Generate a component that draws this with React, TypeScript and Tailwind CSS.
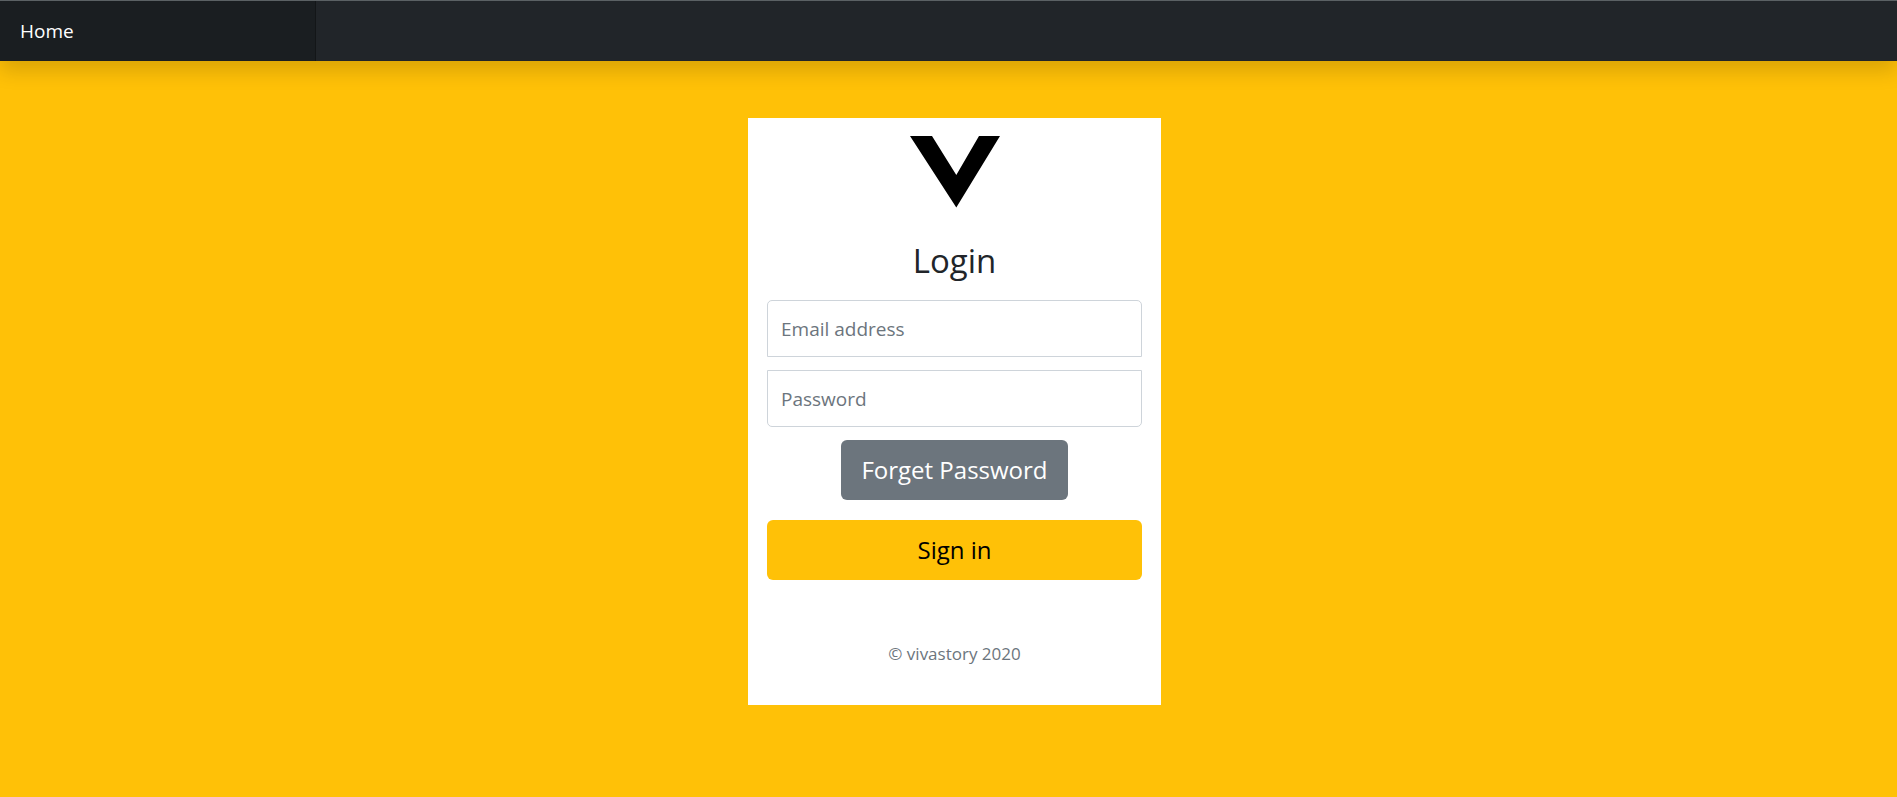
import { useState } from 'react'

function Navbar() {
  return (
    <header className="sticky top-0 border-t border-[#5b6164] bg-[#212529] shadow-[0_10px_20px_rgba(0,0,0,0.15)]">
      <nav className="flex">
        <a
          href="#home"
          className="w-1/6 bg-[#1a1e21] px-5 py-4 text-[19px] leading-7 font-medium text-white shadow-[inset_-1px_0_0_rgba(0,0,0,0.25)]"
        >
          Home
        </a>
      </nav>
    </header>
  )
}

function Logo() {
  return (
    <svg
      role="img"
      aria-label="vivastory"
      viewBox="0 0 90 72"
      className="mx-auto mb-8 h-[72px] w-[90px]"
    >
      <path d="M0 0H22L46.3 39L69 0H90L46.3 71.5Z" fill="#000" />
    </svg>
  )
}

function LoginForm() {
  const [email, setEmail] = useState('')
  const [password, setPassword] = useState('')

  return (
    <form
      className="flex flex-col"
      onSubmit={(e) => e.preventDefault()}
    >
      <Logo />
      <h1 className="mb-[18px] text-center text-[33px] leading-[42px]">Login</h1>

      <input
        type="email"
        aria-label="Email address"
        placeholder="Email address"
        value={email}
        onChange={(e) => setEmail(e.target.value)}
        className="mb-[13px] h-[57px] w-full rounded-t-[5px] border border-[#ced4da] px-[13px] text-[19px] placeholder:text-[#6c757d]"
      />
      <input
        type="password"
        aria-label="Password"
        placeholder="Password"
        value={password}
        onChange={(e) => setPassword(e.target.value)}
        className="mb-[13px] h-[57px] w-full rounded-b-[5px] border border-[#ced4da] px-[13px] text-[19px] placeholder:text-[#6c757d]"
      />

      <button
        type="button"
        className="mb-5 self-center rounded-md bg-[#6c757d] px-5 py-3 text-2xl leading-9 text-white"
      >
        Forget Password
      </button>
      <button
        type="submit"
        className="w-full rounded-md bg-[#ffc107] px-5 py-3 text-2xl leading-9 text-black"
      >
        Sign in
      </button>

      <p className="mt-15 mb-5 text-center text-[17px] leading-7 text-[#6c757d]">
        © vivastory 2020
      </p>
    </form>
  )
}

export default function App() {
  return (
    <div className="min-h-screen bg-[#ffc107] font-['Open_Sans','Noto_Sans',sans-serif] text-[#212529]">
      <Navbar />
      <div className="pt-[57px] pl-3">
        <main className="mx-auto w-full max-w-[413px] bg-white px-[19px] pt-[18px] pb-[17px]">
          <LoginForm />
        </main>
      </div>
    </div>
  )
}
